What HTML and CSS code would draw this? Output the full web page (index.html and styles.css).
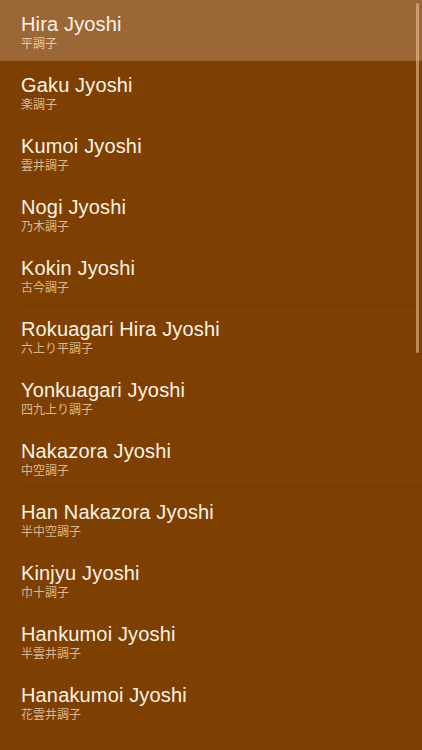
FILE: index.html
```html
<!DOCTYPE html>
<html lang="en">
<head>
<meta charset="utf-8">
<title>Jyoshi</title>
<link rel="stylesheet" href="styles.css">
</head>
<body>
<div class="screen">
  <ul class="list">
    <li class="row selected"><div class="inner"><div class="title">Hira Jyoshi</div><div class="sub">平調子</div></div></li>
    <li class="row"><div class="inner"><div class="title">Gaku Jyoshi</div><div class="sub">楽調子</div></div></li>
    <li class="row"><div class="inner"><div class="title">Kumoi Jyoshi</div><div class="sub">雲井調子</div></div></li>
    <li class="row"><div class="inner"><div class="title">Nogi Jyoshi</div><div class="sub">乃木調子</div></div></li>
    <li class="row"><div class="inner"><div class="title">Kokin Jyoshi</div><div class="sub">古今調子</div></div></li>
    <li class="row"><div class="inner"><div class="title">Rokuagari Hira Jyoshi</div><div class="sub">六上り平調子</div></div></li>
    <li class="row"><div class="inner"><div class="title">Yonkuagari Jyoshi</div><div class="sub">四九上り調子</div></div></li>
    <li class="row"><div class="inner"><div class="title">Nakazora Jyoshi</div><div class="sub">中空調子</div></div></li>
    <li class="row"><div class="inner"><div class="title">Han Nakazora Jyoshi</div><div class="sub">半中空調子</div></div></li>
    <li class="row"><div class="inner"><div class="title">Kinjyu Jyoshi</div><div class="sub">巾十調子</div></div></li>
    <li class="row"><div class="inner"><div class="title">Hankumoi Jyoshi</div><div class="sub">半雲井調子</div></div></li>
    <li class="row"><div class="inner"><div class="title">Hanakumoi Jyoshi</div><div class="sub">花雲井調子</div></div></li>
    <li class="row"><div class="inner"><div class="title">&nbsp;</div><div class="sub">&nbsp;</div></div></li>
  </ul>
  <div class="scrollbar"></div>
</div>
</body>
</html>
```
FILE: styles.css
```css
html, body {
  margin: 0;
  padding: 0;
  background: #7e3f02;
  overflow: hidden;
}
.screen {
  position: relative;
  width: 422px;
  height: 750px;
  overflow: hidden;
  background: #7e3f02;
  font-family: "Liberation Sans", Arial, "Noto Sans CJK JP", sans-serif;
}
.list {
  list-style: none;
  margin: 0;
  padding: 0;
}
.row {
  padding-left: 21px;
  height: 61px;
  box-sizing: border-box;
}
.row.selected {
  background: #9b6737;
}
.inner {
  height: 61px;
  box-sizing: border-box;
  padding-top: 13px;
  border-bottom: 1px solid rgba(0, 0, 0, 0.05);
}
.row.selected .inner {
  border-bottom-color: rgba(0, 0, 0, 0.03);
}
.title {
  font-size: 20px;
  line-height: 22px;
  letter-spacing: 0.15px;
  color: #fcf2e4;
  white-space: nowrap;
}
.sub {
  margin-top: 1px;
  font-family: "Noto Sans CJK JP", "Liberation Sans", sans-serif;
  font-size: 12px;
  line-height: 14px;
  color: #d8b793;
  white-space: nowrap;
}
.row.selected .sub {
  color: #e3c8a9;
}
.scrollbar {
  position: absolute;
  left: 416px;
  top: 3px;
  width: 3px;
  height: 350px;
  border-radius: 2px;
  background: rgba(240, 200, 160, 0.55);
}
```
